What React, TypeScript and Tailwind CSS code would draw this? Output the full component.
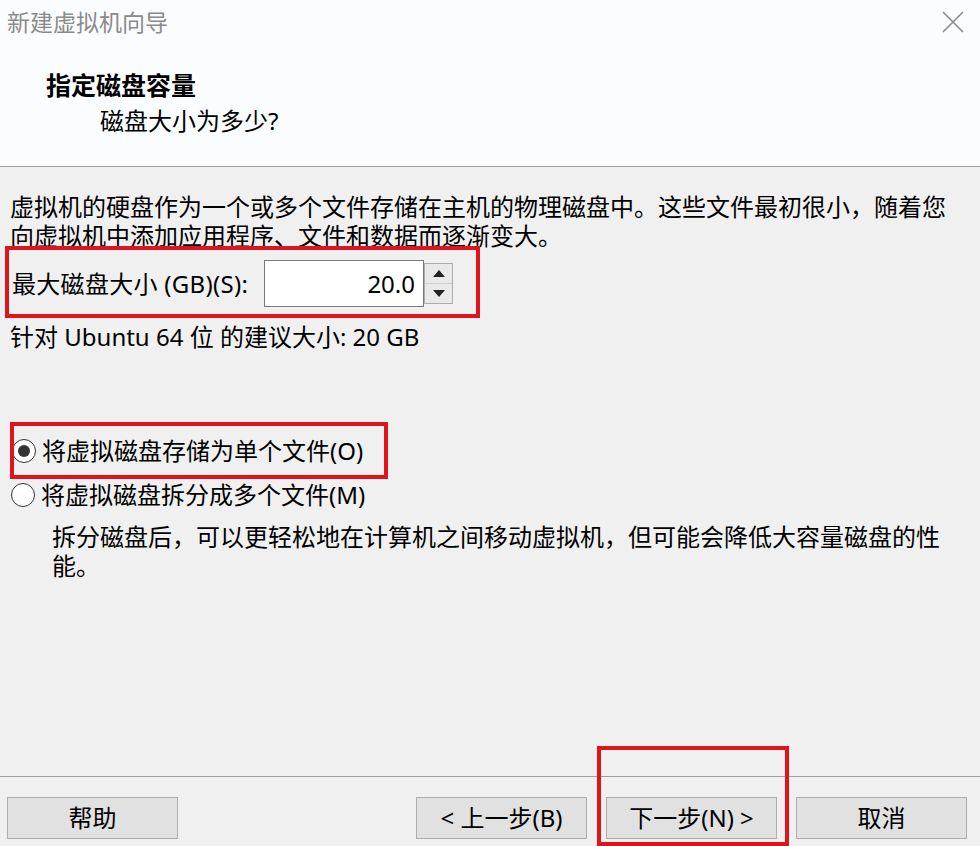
import React, { useState } from "react";

const FONT = "font-['Noto_Sans','Noto_Sans_CJK_SC',sans-serif]";

function RedBox({ className }: { className: string }) {
  // annotation frame drawn over the dialog
  return <div className={"absolute border-4 border-[#e0141c] pointer-events-none " + className} />;
}

function Radio({ checked }: { checked: boolean }) {
  return (
    <span className="w-[24px] h-[24px] rounded-full border-[1.5px] border-[#333] bg-white flex items-center justify-center shrink-0">
      {checked && <span className="w-[12px] h-[12px] rounded-full bg-[#333]" />}
    </span>
  );
}

function Btn({ children }: { children: React.ReactNode }) {
  return (
    <button
      type="button"
      className="w-[171px] h-[42px] bg-[#e1e1e1] border border-[#adadad] text-[24px] leading-none text-black flex items-center justify-center"
    >
      {children}
    </button>
  );
}

export default function App() {
  const [size] = useState("20.0");
  const [split, setSplit] = useState(false);

  return (
    <div className={"w-[980px] h-[846px] flex flex-col bg-[#f0f0f0] overflow-hidden text-black " + FONT}>
      {/* header */}
      <div className="h-[167px] bg-[#fbfcfd] border-b border-[#a0a0a0] shrink-0">
        <div className="flex justify-between items-start">
          <div className="pl-[7px] pt-[6px] text-[23px] leading-[32px] text-[#8a8a8a]">新建虚拟机向导</div>
          <svg width="22" height="22" viewBox="0 0 22 22" className="mt-[11px] mr-[16px]">
            <path d="M1 1 L21 21 M21 1 L1 21" stroke="#8a8a8a" strokeWidth="1.6" fill="none" />
          </svg>
        </div>
        <div className="pl-[46px] mt-[30px] text-[25px] leading-[34px] font-bold">指定磁盘容量</div>
        <div className="pl-[100px] mt-[3px] text-[24px] leading-[32px]">磁盘大小为多少?</div>
      </div>

      {/* body */}
      <div className="flex-1 px-[10px] pt-[25px] text-[24px] leading-[29px]">
        <p>
          虚拟机的硬盘作为一个或多个文件存储在主机的物理磁盘中。这些文件最初很小，随着您
          <br />
          向虚拟机中添加应用程序、文件和数据而逐渐变大。
        </p>

        <div className="relative mt-[10px] flex items-center h-[47px]">
          <RedBox className="left-[-5px] top-[-14px] w-[475px] h-[72px]" />
          <span className="pl-[2px] w-[254px] tracking-[0.3px]">最大磁盘大小 (GB)(S):</span>
          <div className="w-[160px] h-[47px] bg-white border border-[#7a7a7a] flex items-center justify-end pr-[8px]">
            {size}
          </div>
          <div className="w-[29px] h-[41px] border border-[#adadad] bg-[#f0f0f0] flex flex-col">
            <div className="flex-1 flex items-center justify-center border-b border-[#cfcfcf] bg-[#e9e9e9]">
              <svg width="12" height="7" viewBox="0 0 12 7">
                <path d="M6 0 L12 7 L0 7 Z" fill="#222" />
              </svg>
            </div>
            <div className="flex-1 flex items-center justify-center bg-[#e9e9e9]">
              <svg width="12" height="7" viewBox="0 0 12 7">
                <path d="M0 0 L12 0 L6 7 Z" fill="#222" />
              </svg>
            </div>
          </div>
        </div>

        <div className="mt-[15px]">针对 Ubuntu 64 位 的建议大小: 20 GB</div>

        <div className="relative mt-[85px] flex items-center gap-[6px] h-[29px] pl-[2px]" onClick={() => setSplit(false)}>
          <RedBox className="left-0 top-[-14px] w-[378px] h-[57px]" />
          <Radio checked={!split} />
          <span>将虚拟磁盘存储为单个文件(O)</span>
        </div>
        <div className="mt-[15px] flex items-center gap-[6px] h-[29px] pl-[1px]" onClick={() => setSplit(true)}>
          <Radio checked={split} />
          <span>将虚拟磁盘拆分成多个文件(M)</span>
        </div>
        <p className="mt-[13px] pl-[42px]">
          拆分磁盘后，可以更轻松地在计算机之间移动虚拟机，但可能会降低大容量磁盘的性
          <br />
          能。
        </p>
      </div>

      {/* footer */}
      <div className="h-[70px] shrink-0 border-t border-[#a0a0a0] pt-[20px] pl-[7px] pr-[13px] flex items-start">
        <Btn>帮助</Btn>
        <div className="ml-auto flex gap-[19px]">
          <Btn>&lt; 上一步(B)</Btn>
          <div className="relative">
            <RedBox className="left-[-9px] top-[-51px] w-[192px] h-[100px]" />
            <Btn>下一步(N) &gt;</Btn>
          </div>
          <Btn>取消</Btn>
        </div>
      </div>
    </div>
  );
}
